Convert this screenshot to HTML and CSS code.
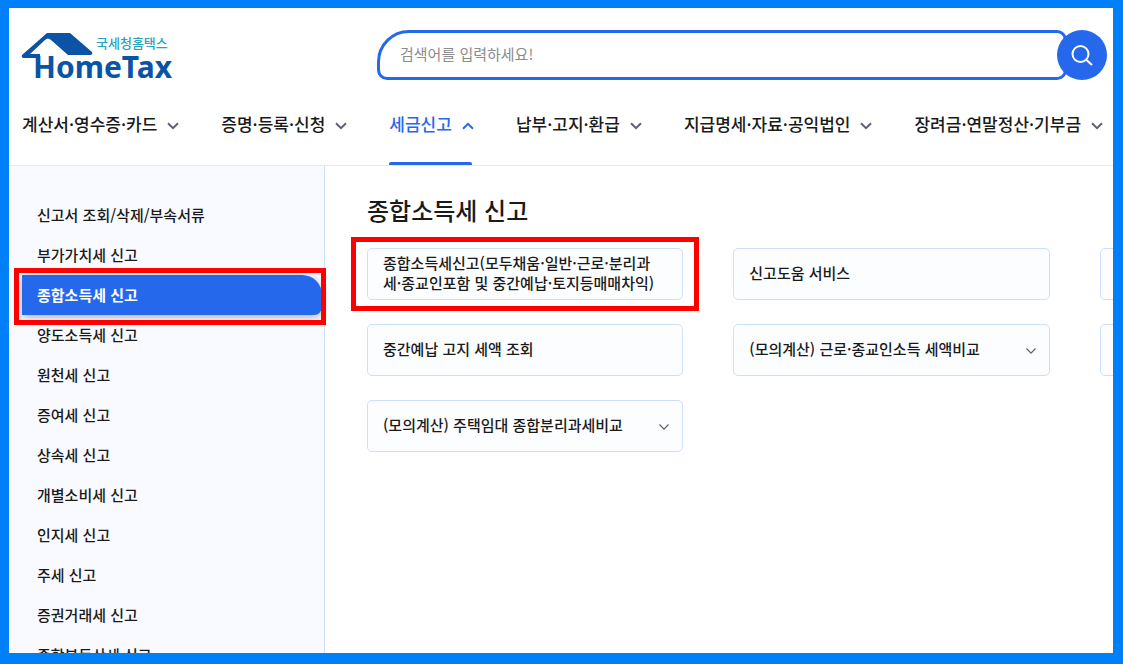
FILE: index.html
```html
<!DOCTYPE html>
<html lang="ko">
<head>
    <meta charset="UTF-8">
    <meta name="viewport" content="width=device-width, initial-scale=1.0">
    <title>국세청 홈택스</title>
    <link rel="stylesheet" href="styles.css">
</head>
<body>

    <svg class="symbols" aria-hidden="true">
        <symbol id="chevron" viewBox="0 0 12 8">
            <path d="M1 1.2 L6 6.2 L11 1.2" fill="none" stroke="currentColor" stroke-width="2"/>
        </symbol>
        <symbol id="chevron-thin" viewBox="0 0 12 8">
            <path d="M1.5 1.5 L6 6.2 L10.5 1.5" fill="none" stroke="currentColor" stroke-width="1.2"/>
        </symbol>
    </svg>

    <div class="page">
        <header class="header">
            <a href="#" class="logo" aria-label="국세청홈택스 HomeTax">
                <svg width="150" height="50" viewBox="0 0 150 50">
                    <path class="logo-mark" d="M0 23 L25 1 H48 L70 20 Q71 23 68 23 H46 L29 8 Q26 5 23 8 L8 22 H18 V26 H1 Q-1 25 0 23 Z"/>
                    <text class="logo-ko" x="74" y="16">국세청홈택스</text>
                    <text class="logo-en" x="11" y="46">HomeTax</text>
                </svg>
            </a>
            <form class="search">
                <input type="text" class="search-input" placeholder="검색어를 입력하세요!" aria-label="검색어">
                <button type="button" class="search-button" aria-label="검색">
                    <svg width="22" height="22" viewBox="0 0 22 22" fill="none" stroke="#fff" stroke-width="2">
                        <circle cx="9.5" cy="10" r="8"/>
                        <path d="M15.5 16 L21 21"/>
                    </svg>
                </button>
            </form>
        </header>

        <nav class="gnb">
            <button class="gnb-item">계산서·영수증·카드 <svg class="chevron"><use href="#chevron"/></svg></button>
            <button class="gnb-item">증명·등록·신청 <svg class="chevron"><use href="#chevron"/></svg></button>
            <button class="gnb-item active">세금신고 <svg class="chevron"><use href="#chevron"/></svg></button>
            <button class="gnb-item">납부·고지·환급 <svg class="chevron"><use href="#chevron"/></svg></button>
            <button class="gnb-item">지급명세·자료·공익법인 <svg class="chevron"><use href="#chevron"/></svg></button>
            <button class="gnb-item">장려금·연말정산·기부금 <svg class="chevron"><use href="#chevron"/></svg></button>
        </nav>

        <div class="body">
            <aside class="sidebar">
                <ul class="lnb">
                    <li><a href="#">신고서 조회/삭제/부속서류</a></li>
                    <li><a href="#">부가가치세 신고</a></li>
                    <li class="active"><a href="#">종합소득세 신고</a></li>
                    <li><a href="#">양도소득세 신고</a></li>
                    <li><a href="#">원천세 신고</a></li>
                    <li><a href="#">증여세 신고</a></li>
                    <li><a href="#">상속세 신고</a></li>
                    <li><a href="#">개별소비세 신고</a></li>
                    <li><a href="#">인지세 신고</a></li>
                    <li><a href="#">주세 신고</a></li>
                    <li><a href="#">증권거래세 신고</a></li>
                    <li><a href="#">종합부동산세 신고</a></li>
                </ul>
            </aside>

            <main class="content">
                <h2>종합소득세 신고</h2>
                <ul class="cards">
                    <li class="marked"><a href="#" class="card">종합소득세신고(모두채움·일반·근로·분리과세·종교인포함 및 중간예납·토지등매매차익)</a></li>
                    <li><a href="#" class="card">신고도움 서비스</a></li>
                    <li class="card"></li>
                    <li><a href="#" class="card">중간예납 고지 세액 조회</a></li>
                    <li><button class="card">(모의계산) 근로·종교인소득 세액비교 <svg class="chevron"><use href="#chevron-thin"/></svg></button></li>
                    <li class="card"></li>
                    <li><button class="card">(모의계산) 주택임대 종합분리과세비교 <svg class="chevron"><use href="#chevron-thin"/></svg></button></li>
                </ul>
            </main>
        </div>
    </div>

</body>
</html>
```

FILE: styles.css
```css
* {
    box-sizing: border-box;
}
body {
    margin: 0;
    font-family: "Noto Sans CJK KR", sans-serif;
    font-weight: 500;
    color: #1a1a1a;
}
ul {
    list-style: none;
    margin: 0;
    padding: 0;
}
a {
    color: inherit;
    text-decoration: none;
}
button {
    font: inherit;
    color: inherit;
    cursor: pointer;
}
.symbols {
    display: none;
}
.page {
    display: flex;
    flex-direction: column;
    height: 100vh;
    overflow: hidden;
    background-color: #fff;
    border: solid #0080f8;
    border-width: 8px 10px 11px 9px;
}

/* header */
.header {
    display: flex;
    justify-content: space-between;
    padding: 22px 6px 0 13px;
}
.logo svg {
    display: block;
    margin-top: 2px;
    overflow: visible;
}
.logo-mark {
    fill: #0b54a5;
}
.logo-ko {
    font-size: 13px;
    fill: #26a3bd;
}
.logo-en {
    font-family: "Noto Sans", sans-serif;
    font-size: 30px;
    font-weight: 700;
    fill: #0b54a5;
}
.search {
    display: flex;
    width: 730px;
    max-width: 70%;
}
.search-input {
    flex: 1;
    min-width: 0;
    height: 50px;
    padding: 0 20px 3px;
    border: 3px solid #2568ec;
    border-radius: 32px 10px 10px 10px;
    font-family: inherit;
    font-size: 15px;
    outline: none;
}
.search-input::placeholder {
    color: #8c8c8c;
    font-weight: 400;
}
.search-button {
    display: flex;
    align-items: center;
    justify-content: center;
    width: 50px;
    height: 50px;
    margin-left: -10px;
    padding: 0;
    border: none;
    border-radius: 50%;
    background-color: #2568ec;
}

/* top menu */
.gnb {
    display: flex;
    flex-shrink: 0;
    gap: 42px;
    height: 84px;
    padding-left: 13px;
    border-bottom: 1px solid #e8eaee;
}
.gnb-item {
    position: relative;
    display: flex;
    align-items: center;
    gap: 10px;
    padding: 0;
    border: none;
    background: none;
    font-size: 17px;
    white-space: nowrap;
}
.gnb-item.active {
    color: #2568ec;
}
.gnb-item.active::after {
    content: "";
    position: absolute;
    left: 0;
    right: 2px;
    bottom: 0;
    height: 3px;
    border-radius: 2px 2px 0 0;
    background-color: #2568ec;
}
.chevron {
    flex-shrink: 0;
    width: 12px;
    height: 8px;
    margin-top: 4px;
    color: #5d6173;
}
.active .chevron {
    color: #2568ec;
    transform: rotate(180deg);
}

/* left menu */
.body {
    display: flex;
    flex: 1;
    min-height: 0;
}
.sidebar {
    flex-shrink: 0;
    width: 316px;
    padding: 29px 2px 0 13px;
    border-right: 1px solid #cfdffb;
    background-color: #f8faff;
}
.lnb a {
    display: block;
    height: 40px;
    padding-left: 15px;
    font-size: 15px;
    line-height: 40px;
}
.lnb .active {
    position: relative;
}
.lnb .active a {
    border-radius: 0 20px 8px 0;
    background-color: #2568ec;
    box-shadow: 0 2px 8px rgba(0, 0, 0, 0.3);
    color: #fff;
    font-weight: 700;
}

/* red highlight boxes */
.lnb .active::after,
.marked::after {
    content: "";
    position: absolute;
    border: 5px solid #f00;
    pointer-events: none;
}
.lnb .active::after {
    inset: -7px -4px -10px -8px;
}
.marked::after {
    inset: -11px -16px;
}

/* content */
.content {
    flex: 1;
    min-width: 0;
    padding: 24px 0 0 42px;
}
h2 {
    margin: 0 0 18px;
    font-size: 24px;
    font-weight: 500;
    line-height: 40px;
}
.cards {
    display: grid;
    grid-template-columns: repeat(3, 42.4%);
    gap: 24px 50px;
}
.marked {
    position: relative;
}
.card {
    display: flex;
    align-items: center;
    justify-content: space-between;
    width: 100%;
    height: 52px;
    padding: 0 24px 2px 15px;
    border: 1px solid #cfdffb;
    border-radius: 5px;
    background-color: #fcfdff;
    font-size: 15px;
    line-height: 20px;
    text-align: left;
}
button.card {
    padding-right: 12px;
}
```
